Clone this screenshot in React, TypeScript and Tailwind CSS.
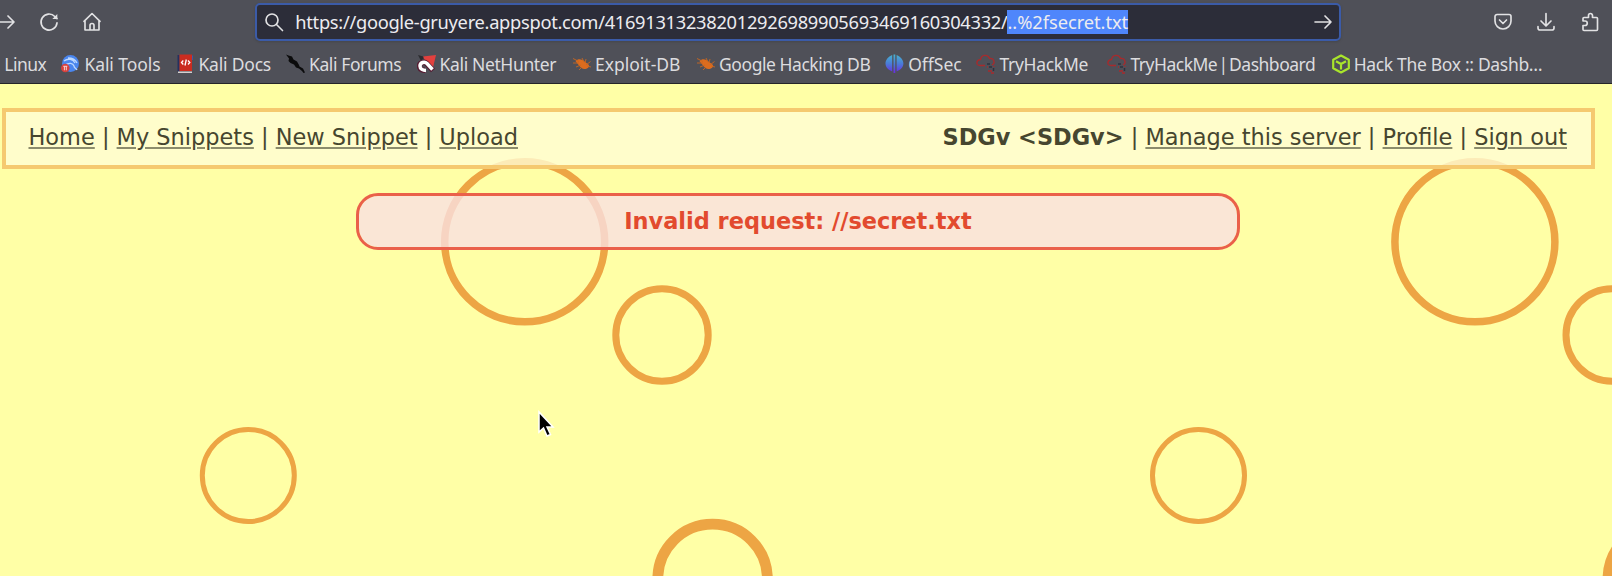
import React from "react";

const RINGS: [number, number, number, number][] = [
  [524.7, 241.8, 80, 7.5],
  [662, 335, 46.2, 7],
  [248.3, 475.5, 46, 5],
  [712.6, 579, 54.8, 10.8],
];

function CheeseBackground() {
  return (
    <svg className="absolute inset-0" width="1612" height="576" fill="none" stroke="#eda544">
      {[0, 950.2].map((dx) =>
        RINGS.map(([x, y, r, w]) => <circle key={`${dx}-${x}`} cx={x + dx} cy={y} r={r} strokeWidth={w} />),
      )}
    </svg>
  );
}

function Icon({ children, className = "" }: { children: React.ReactNode; className?: string }) {
  return (
    <svg
      viewBox="0 0 20 20"
      className={`size-5 shrink-0 ${className}`}
      fill="none"
      stroke="#e2e2e4"
      strokeWidth="1.650"
      strokeLinecap="round"
      strokeLinejoin="round"
    >
      {children}
    </svg>
  );
}

function ToolsIcon() {
  return (
    <svg viewBox="0 0 20 20" className="size-5 shrink-0" fill="none">
      <circle cx="9.500" cy="9.500" r="8.500" fill="#4a86ee" />
      <path d="M3 7c4-3 9-2 11 2M4 11c4-2.500 8-2 9 1 0 2 2 2 3 4M7 4c4 0 7 1 9 5" stroke="#bcd8ff" strokeWidth="1.300" />
      <circle cx="4.300" cy="14" r="4.300" fill="#d8413c" />
      <path d="M2.300 12.300h4M3.400 12.300v4M5.300 12.300v4" stroke="#f7d4d2" strokeWidth="1" />
    </svg>
  );
}

function DocsIcon() {
  return (
    <svg viewBox="0 0 20 20" className="size-5 shrink-0" fill="none">
      <path d="M2.500 1h2v16.500h-2z" fill="#26305e" />
      <path d="M4.500.5H17V17H4.500z" fill="#cb2c20" />
      <path d="M17 1.500h1V6h-1z" fill="#3d59a8" />
      <path d="M3 17.500h14v1.500H3z" fill="#d5d0d0" />
      <path d="M8.300 6.500 6.500 8.500l1.800 2M13 6.500l1.800 2-1.800 2M11.300 5.500 10 11.500" stroke="#fff" strokeWidth="1.300" />
    </svg>
  );
}

function ForumsIcon() {
  return (
    <svg viewBox="0 0 20 20" className="size-5 shrink-0" fill="#0b0b0c">
      <path d="M0 .5l2.500 1 3.500 1 1.500 3L11 7.500l2 3.500.5 1.500 3.500 2 2 4-1.500.5-1.500-2-3-2.500-3-1-2-3-3.500-1.500L2.500 7 3 4.500z" />
    </svg>
  );
}

function NetHunterIcon() {
  return (
    <svg viewBox="0 0 20 20" className="size-5 shrink-0" fill="none">
      <path d="M1 1l7 2-4 4z" fill="#2c2c30" />
      <path d="M6 2.500l13-1.500-3 12.500-5-1z" fill="#e2403e" />
      <path d="M16 16.500 9.500 9.500C7 7 2 9 2.500 12.500c.5 3.500 4 4 6 3.500" stroke="#571d33" strokeWidth="5.500" />
      <path d="M15.500 15.500 10 9.500C7.500 7 3 8.500 3 12c0 3 3 4.500 6 4.500" stroke="#fff" strokeWidth="3.500" />
    </svg>
  );
}

function ExploitIcon() {
  return (
    <svg viewBox="0 0 20 20" className="size-5 shrink-0" fill="none">
      <path d="M3.500 7c3-3 7-1.500 9 .5l4 3c1.500 2-.5 4-3 4.500-3 .5-4.500-1-6.500-3.500z" fill="#dc6c1e" />
      <path d="M1 4.500l6 3M1 9h6M4 13l5-2M7 16l3-3M10 4l2 4M14 5l-1 4M18.500 7.500 14 11M19 13l-4-1" stroke="#c9661f" strokeWidth=".9" />
    </svg>
  );
}

function OffSecIcon() {
  return (
    <svg viewBox="0 0 20 20" className="size-5 shrink-0">
      <defs>
        <linearGradient id="offsec" x1="0" y1="0" x2="0" y2="1">
          <stop offset="0" stopColor="#48b4cf" />
          <stop offset=".5" stopColor="#4a7bd8" />
          <stop offset="1" stopColor="#6b2be0" />
        </linearGradient>
      </defs>
      <path
        d="M7.200 1v16.500C3.200 16 .5 13 .5 9.500S3.200 2.500 7.200 1zM8.500.5h1.800v18.500H8.500zM11.600 1c4 1.500 6.800 5 6.800 8.500s-2.800 6.500-6.800 8z"
        fill="url(#offsec)"
      />
    </svg>
  );
}

function TryHackMeIcon() {
  return (
    <svg viewBox="0 0 20 20" className="size-5 shrink-0" fill="none">
      <path d="M9 11.500H4C-.5 11.500 0 6 4.500 5.500 5.500 .5 12 0 13.500 4.500c5-.5 6 5 2.500 6.500" stroke="#a82a2c" strokeWidth="1.300" />
      <path d="M11 10h3M13 13h3M17.500 14v3" stroke="#2c3340" strokeWidth="1.500" />
      <path d="M12 13h-1M18 12v1M12 17h4M15 19h3" stroke="#a82a2c" strokeWidth="1.400" />
    </svg>
  );
}

function HackTheBoxIcon() {
  return (
    <svg viewBox="0 0 20 20" className="size-5 shrink-0" fill="none" stroke="#a9e52b" strokeWidth="2.200" strokeLinejoin="round">
      <path d="M10 1.500l7.800 4.200v8.600L10 18.500l-7.800-4.200V5.700zM5 7.200 10 10l5-2.800M10 10v5.500" />
    </svg>
  );
}

const BOOKMARKS: { label: string; icon: () => React.ReactElement; slot: string }[] = [
  { label: "Kali Tools", icon: ToolsIcon, slot: "w-[114px] tracking-[-0.07px]" },
  { label: "Kali Docs", icon: DocsIcon, slot: "w-[110.6px] tracking-[-0.19px]" },
  { label: "Kali Forums", icon: ForumsIcon, slot: "w-[130.6px] tracking-[-0.4px]" },
  { label: "Kali NetHunter", icon: NetHunterIcon, slot: "w-[155.4px] tracking-[-0.37px]" },
  { label: "Exploit-DB", icon: ExploitIcon, slot: "w-[124.1px]" },
  { label: "Google Hacking DB", icon: ExploitIcon, slot: "w-[189.1px] tracking-[-0.45px]" },
  { label: "OffSec", icon: OffSecIcon, slot: "w-[91.3px]" },
  { label: "TryHackMe", icon: TryHackMeIcon, slot: "w-[131px] tracking-[-0.3px]" },
  { label: "TryHackMe | Dashboard", icon: TryHackMeIcon, slot: "w-[223.2px] tracking-[-0.5px] [word-spacing:-2.7px]" },
  { label: "Hack The Box :: Dashb…", icon: HackTheBoxIcon, slot: "w-[240px] tracking-[-0.32px]" },
];

function BrowserChrome() {
  return (
    <header className="h-[84px] overflow-hidden border-b border-[#252528] bg-[#4f5058] font-['Noto_Sans','Liberation_Sans',sans-serif] text-[#dcdcdf]">
      <div className="flex h-11 items-center">
        <div className="flex w-[255px] shrink-0 items-center">
          <Icon className="-ml-[5px]">
            <path d="M2 10h17M13 4l6 6-6 6" />
          </Icon>
          <Icon className="ml-[24px]">
            <path d="M18 10.800A8 8 0 1 1 15.800 4.500L18 6.600" />
            <path d="M18.300 2v5h-5z" fill="#e2e2e4" stroke="none" />
          </Icon>
          <Icon className="ml-[23px]">
            <path d="M2 9.300 10 1.500l8 7.800M3 8.500V18h14V8.500M8 18v-4.500a2 2 0 0 1 4 0V18" />
          </Icon>
        </div>
        <div className="flex h-[38px] w-[1086px] shrink-0 items-center rounded-[5px] border-2 border-[#3b5ba8] bg-[#2c2d39] pr-[6px] pl-[7px] shadow-sm">
          <Icon>
            <circle cx="8" cy="8" r="6" />
            <path d="m12.500 12.500 6 6" />
          </Icon>
          <div className="ml-[11.300px] flex grow items-center text-[18.300px] leading-6 whitespace-nowrap text-[#ececf0]">
            <span className="tracking-[-0.295px]">https://google-gruyere.appspot.com/416913132382012926989905693469160304332/</span>
            <span className="bg-[#4f86fb] tracking-[-0.05px]">..%2fsecret.txt</span>
          </div>
          <Icon>
            <path d="M2 10h16M12 4l6 6-6 6" />
          </Icon>
        </div>
        <Icon className="ml-[152px]">
          <path d="M4 2.500h12a2 2 0 0 1 2 2V9a8 8 0 0 1-16 0V4.500a2 2 0 0 1 2-2zM6.500 8l3.500 3.500L13.500 8" />
        </Icon>
        <Icon className="ml-[23px]">
          <path d="M10 1.500v12M5 9l5 5 5-5M2 14.500V16a2 2 0 0 0 2 2h12a2 2 0 0 0 2-2v-1.500" />
        </Icon>
        <Icon className="ml-[24px]">
          <path d="M4 18.500h12.500a1 1 0 0 0 1-1v-11a1 1 0 0 0-1-1h-4V3.500a2 2 0 0 0-4 0v2H4a1 1 0 0 0-1 1V9h2a2 2 0 0 1 0 4.500H3v4a1 1 0 0 0 1 1z" />
        </Icon>
      </div>
      <div className="flex h-10 items-center text-[17.500px] leading-[38px] whitespace-nowrap">
        <div className="flex w-[61.400px] shrink-0 justify-end pr-[15px] tracking-[-0.5px]">Kali Linux</div>
        {BOOKMARKS.map(({ label, icon: Glyph, slot }) => (
          <div key={label} className={`flex shrink-0 items-center gap-[3px] ${slot}`}>
            <Glyph />
            <span>{label}</span>
          </div>
        ))}
      </div>
    </header>
  );
}

function Links({ items }: { items: string[] }) {
  return (
    <>
      {items.map((item, i) => (
        <React.Fragment key={item}>
          {i > 0 && " | "}
          <a className="underline decoration-[#8c8c6c] decoration-2 underline-offset-[2px]">{item}</a>
        </React.Fragment>
      ))}
    </>
  );
}

export default function App() {
  return (
    <div className="relative h-[576px] w-[1612px] overflow-hidden bg-[#ffffa6]">
      <CheeseBackground />
      <div className="relative">
        <BrowserChrome />
        <main className="font-['DejaVu_Sans',sans-serif] text-[22.450px]">
          <nav className="mt-6 ml-[1.500px] flex h-[61px] w-[1593.500px] items-center justify-between border-4 border-[#f5c970] bg-[#fffdd4]/80 bg-clip-padding pr-6 pb-[2px] pl-[23px] text-[#46462f]">
            <div className="whitespace-nowrap">
              <Links items={["Home", "My Snippets", "New Snippet", "Upload"]} />
            </div>
            <div className="whitespace-nowrap">
              <b>SDGv &lt;SDGv&gt;</b>
              {" | "}
              <Links items={["Manage this server", "Profile", "Sign out"]} />
            </div>
          </nav>
          <div className="mt-6 ml-[356px] flex h-[57px] w-[884px] items-center justify-center rounded-[22px] border-3 border-[#ea604a] bg-[#f9e0e2]/80 bg-clip-padding font-bold text-[#e24a2e]">
            Invalid request: //secret.txt
          </div>
        </main>
      </div>
      <svg className="absolute top-[410px] left-[537px]" width="20" height="30" viewBox="0 0 20 30">
        <path d="M2 2v20l4.500-4 3.500 8 3.500-1.500-3.500-7.500h6z" fill="#000" stroke="#fff" strokeWidth="1.500" />
      </svg>
    </div>
  );
}
